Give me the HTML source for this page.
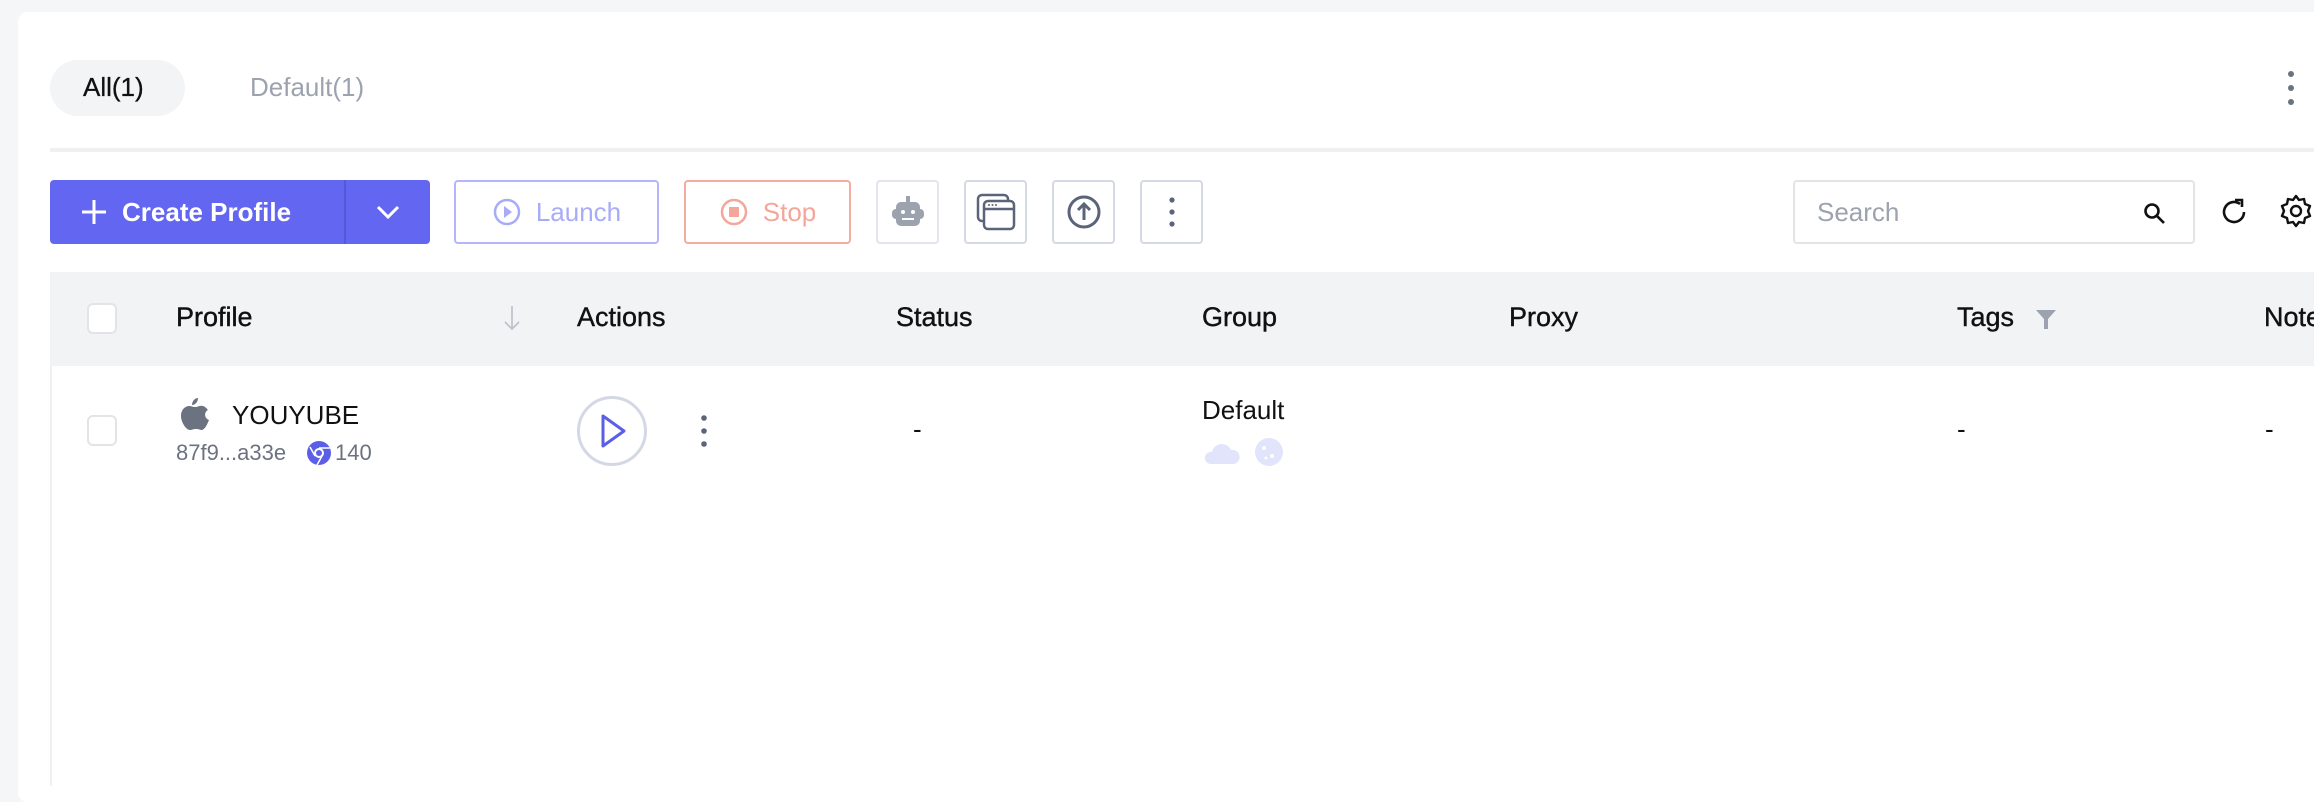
<!DOCTYPE html>
<html><head><meta charset="utf-8"><style>
*{box-sizing:border-box;margin:0;padding:0}
body{width:2314px;height:786px;background:#f5f6f8;font-family:"Liberation Sans",sans-serif;position:relative;overflow:hidden;color:#111}
.a{position:absolute}
.card{left:18px;top:12px;width:2310px;height:790px;background:#fff;border-radius:10px}
.btn{position:absolute;top:180px;height:64px;border-radius:4px;display:flex;align-items:center;justify-content:center}
.ib{width:63px;border:2px solid #d5d9e6;background:#fff}
.h{position:absolute;top:302px;font-size:27px;font-weight:normal;color:#111;-webkit-text-stroke:0.4px #111}
.cb{position:absolute;width:30px;height:31px;border:2px solid #e2e4e8;border-radius:6px;background:#fff}
</style></head><body>
<div class="a card"></div>
<div class="a" style="left:50px;top:60px;width:135px;height:56px;border-radius:28px;background:#f3f4f6"></div>
<div class="a" style="left:83px;top:72px;font-size:26px;color:#111;-webkit-text-stroke:0.3px #111">All(1)</div>
<div class="a" style="left:250px;top:72px;font-size:26px;color:#9ca3af">Default(1)</div>
<svg class="a" style="left:2284px;top:70px" width="14" height="36"><circle cx="7" cy="4" r="3" fill="#6b7280"/><circle cx="7" cy="18" r="3" fill="#6b7280"/><circle cx="7" cy="32" r="3" fill="#6b7280"/></svg>
<div class="a" style="left:50px;top:148px;width:2270px;height:4px;background:#eef0f2"></div>

<div class="btn" style="left:50px;width:380px;background:#6366f1;justify-content:flex-start">
 <svg style="margin-left:30px" width="28" height="28"><path d="M14 2V26M2 14H26" stroke="#fff" stroke-width="3"/></svg>
 <span style="color:#fff;font-size:26px;font-weight:bold;margin-left:14px">Create Profile</span>
 <div style="position:absolute;left:294px;top:0;width:2px;height:64px;background:#5558d8"></div>
 <svg style="position:absolute;left:325px;top:22px" width="26" height="20"><path d="M3 5L13 15L23 5" stroke="#fff" stroke-width="3" fill="none"/></svg>
</div>
<div class="btn" style="left:454px;width:205px;border:2px solid #b4b6fb;background:#fff">
 <svg width="30" height="30"><circle cx="15" cy="15" r="12" stroke="#a8abf8" stroke-width="2.5" fill="none"/><path d="M12 9L20 15L12 21Z" fill="#a8abf8"/></svg>
 <span style="color:#a8abf8;font-size:26px;margin-left:14px">Launch</span>
</div>
<div class="btn" style="left:684px;width:167px;border:2px solid #f4aba0;background:#fff">
 <svg width="30" height="30"><circle cx="15" cy="15" r="12" stroke="#f4a69a" stroke-width="2.5" fill="none"/><rect x="10" y="10" width="10" height="10" fill="#f4a69a"/></svg>
 <span style="color:#f4a69a;font-size:26px;margin-left:14px">Stop</span>
</div>
<div class="btn ib" style="left:876px;border-color:#e2e5ee"><svg width="36" height="36"><rect x="16" y="2" width="4" height="6" fill="#9ca3af"/><rect x="6" y="8" width="24" height="24" rx="5" fill="#9ca3af"/><rect x="2" y="15" width="32" height="10" rx="4" fill="#9ca3af"/><circle cx="13" cy="18" r="2" fill="#fff"/><circle cx="23" cy="18" r="2" fill="#fff"/><rect x="12" y="24" width="12" height="2" fill="#fff"/></svg></div>
<div class="btn ib" style="left:964px"><svg width="40" height="40"><rect x="2" y="3" width="30" height="26" rx="4" stroke="#5b6478" stroke-width="2.5" fill="#fff"/><rect x="8" y="9" width="30" height="28" rx="4" stroke="#5b6478" stroke-width="2.5" fill="#fff"/><path d="M8 17H38" stroke="#5b6478" stroke-width="2.5"/><circle cx="13" cy="13" r="1" fill="#5b6478"/><circle cx="16.5" cy="13" r="1" fill="#5b6478"/><circle cx="20" cy="13" r="1" fill="#5b6478"/></svg></div>
<div class="btn ib" style="left:1052px"><svg width="36" height="36"><circle cx="18" cy="18" r="15" stroke="#5b6478" stroke-width="3" fill="none"/><path d="M18 26V11M12 16L18 10L24 16" stroke="#5b6478" stroke-width="3" fill="none"/></svg></div>
<div class="btn ib" style="left:1140px"><svg width="10" height="36"><circle cx="5" cy="6" r="2.6" fill="#5b6478"/><circle cx="5" cy="18" r="2.6" fill="#5b6478"/><circle cx="5" cy="30" r="2.6" fill="#5b6478"/></svg></div>

<div class="btn" style="left:1793px;width:402px;border:2px solid #e2e4e8;background:#fff;justify-content:flex-start">
 <span style="margin-left:22px;font-size:26px;color:#9ca3af">Search</span>
 <svg style="position:absolute;right:26px;top:20px" width="24" height="24"><circle cx="9" cy="9" r="6.5" stroke="#111" stroke-width="2.6" fill="none"/><path d="M14 14L21 21" stroke="#111" stroke-width="2.6"/></svg>
</div>
<svg class="a" style="left:2218px;top:196px" width="32" height="32"><path d="M26 16A10 10 0 1 1 22 8" stroke="#111" stroke-width="2.6" fill="none"/><path d="M17 4H24V11" stroke="#111" stroke-width="2.6" fill="none"/></svg>
<svg class="a" style="left:2278px;top:194px" width="36" height="36"><path d="M18 2L21 6L26 5L27 10L32 12L30 17L32 22L27 24L26 29L21 28L18 32L15 28L10 29L9 24L4 22L6 17L4 12L9 10L10 5L15 6Z" stroke="#111" stroke-width="2.4" fill="none" stroke-linejoin="round"/><circle cx="18" cy="17" r="5" stroke="#111" stroke-width="2.4" fill="none"/></svg>

<div class="a" style="left:50px;top:272px;width:2270px;height:94px;background:#f2f3f5"></div>
<div class="a" style="left:50px;top:366px;width:2px;height:420px;background:#eef0f2"></div>
<div class="cb" style="left:87px;top:303px"></div>
<div class="h" style="left:176px">Profile</div>
<svg class="a" style="left:503px;top:304px" width="18" height="28"><path d="M9 2V25M2 18L9 25L16 18" stroke="#bbbfc6" stroke-width="1.6" fill="none"/></svg>
<div class="h" style="left:577px">Actions</div>
<div class="h" style="left:896px">Status</div>
<div class="h" style="left:1202px">Group</div>
<div class="h" style="left:1509px">Proxy</div>
<div class="h" style="left:1957px">Tags</div>
<svg class="a" style="left:2034px;top:308px" width="24" height="24"><path d="M2 2H22L14 11V21H10V11Z" fill="#9ca3af"/></svg>
<div class="h" style="left:2264px">Notes</div>

<div class="cb" style="left:87px;top:415px"></div>
<svg class="a" style="left:178px;top:396px" width="34" height="36"><path d="M20 2C20 6 17 9 14 9C14 5 17 2 20 2Z" fill="#6b7280"/><path d="M17 11C20 11 22 9 25 10C28 11 29 13 30 14C26 16 26 22 31 24C29 29 27 33 24 34C22 34 21 33 18 33C15 33 14 34 12 34C8 34 3 26 3 20C3 13 8 10 11 10C13 10 15 11 17 11Z" fill="#6b7280"/></svg>
<div class="a" style="left:232px;top:400px;font-size:26px;color:#111">YOUYUBE</div>
<div class="a" style="left:176px;top:440px;font-size:22px;color:#6b7280">87f9...a33e</div>
<svg class="a" style="left:306px;top:440px" width="26" height="26"><circle cx="13" cy="13" r="12" fill="#5b5fe8"/><circle cx="13" cy="13" r="5" fill="#fff"/><circle cx="13" cy="13" r="3" fill="#5b5fe8"/><path d="M13 8H24M9 16L4 7M16 16L11 25" stroke="#fff" stroke-width="1.5"/></svg>
<div class="a" style="left:335px;top:440px;font-size:22px;color:#6b7280">140</div>

<div class="a" style="left:577px;top:396px;width:70px;height:70px;border:3px solid #d4d8e5;border-radius:50%"></div>
<svg class="a" style="left:598px;top:413px" width="32" height="36"><path d="M5 3L26 18L5 33Z" stroke="#5b5fe8" stroke-width="3" fill="none" stroke-linejoin="round"/></svg>
<svg class="a" style="left:698px;top:413px" width="12" height="36"><circle cx="6" cy="5" r="2.8" fill="#5b6478"/><circle cx="6" cy="18" r="2.8" fill="#5b6478"/><circle cx="6" cy="31" r="2.8" fill="#5b6478"/></svg>
<div class="a" style="left:913px;top:414px;font-size:26px">-</div>
<div class="a" style="left:1202px;top:395px;font-size:26px">Default</div>
<svg class="a" style="left:1204px;top:438px" width="36" height="28"><path d="M6 26A6 6 0 0 1 8 14A10 10 0 0 1 27 12A7 7 0 0 1 30 26Z" fill="#e2e4fb"/></svg>
<svg class="a" style="left:1254px;top:436px" width="32" height="32"><circle cx="15" cy="16" r="14" fill="#e2e4fb"/><circle cx="10" cy="12" r="2" fill="#fff"/><circle cx="18" cy="20" r="2" fill="#fff"/><circle cx="12" cy="22" r="1.5" fill="#fff"/></svg>
<div class="a" style="left:1957px;top:414px;font-size:26px">-</div>
<div class="a" style="left:2265px;top:414px;font-size:26px">-</div>
</body></html>
